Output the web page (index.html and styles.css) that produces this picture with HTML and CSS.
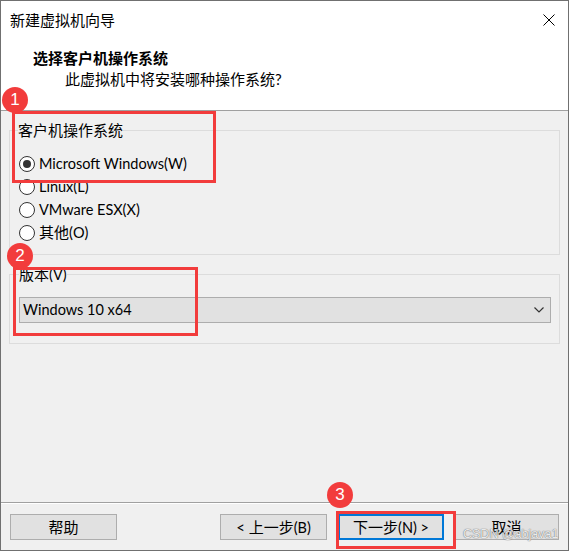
FILE: index.html
```html
<!DOCTYPE html>
<html lang="zh">
<head>
<meta charset="utf-8">
<title>新建虚拟机向导</title>
<link rel="stylesheet" href="styles.css">
</head>
<body>
<div class="window">
  <div class="titlebar">
    <span class="title">新建虚拟机向导</span>
    <svg class="close" width="12" height="12" viewBox="0 0 12 12"><path d="M0.5 0.5 L11.5 11.5 M11.5 0.5 L0.5 11.5" stroke="#000" stroke-width="1" fill="none"/></svg>
  </div>
  <div class="header">
    <div class="heading">选择客户机操作系统</div>
    <div class="subheading">此虚拟机中将安装哪种操作系统?</div>
  </div>
  <div class="content">
    <fieldset class="group group-os">
      <legend>客户机操作系统</legend>
      <label class="radio-row"><span class="radio checked"></span><span class="latin">Microsoft Windows(W)</span></label>
      <label class="radio-row"><span class="radio"></span><span class="latin">Linux(L)</span></label>
      <label class="radio-row"><span class="radio"></span><span class="latin">VMware ESX(X)</span></label>
      <label class="radio-row"><span class="radio"></span><span>其他<span class="latin">(O)</span></span></label>
    </fieldset>
    <fieldset class="group group-ver">
      <legend>版本<span class="latin">(V)</span></legend>
      <div class="select">
        <span class="latin">Windows 10 x64</span>
        <svg class="chev" width="10" height="6" viewBox="0 0 10 6"><path d="M0.5 0.5 L5 5 L9.5 0.5" stroke="#333" stroke-width="1.2" fill="none"/></svg>
      </div>
    </fieldset>
    <div class="spacer"></div>
    <div class="footer">
      <button class="btn btn-help">帮助</button>
      <div class="btn-group">
        <button class="btn btn-back">&lt; 上一步<span class="latin">(B)</span></button>
        <button class="btn btn-next">下一步<span class="latin">(N) &gt;</span></button>
        <button class="btn btn-cancel">取消</button>
      </div>
    </div>
  </div>

  <div class="mark box1"></div>
  <div class="badge badge1">1</div>
  <div class="mark box2"></div>
  <div class="badge badge2">2</div>
  <div class="mark box3"></div>
  <div class="badge badge3">3</div>
  <div class="watermark">CSDN @abjava1</div>
</div>
</body>
</html>
```

FILE: styles.css
```css
* { box-sizing: border-box; }
html, body { margin: 0; padding: 0; background: #fff; }
body {
  font-family: Lato, "Noto Sans CJK SC", sans-serif;
  font-size: 15px;
  color: #000;
}
.latin { font-size: 14.5px; }
.window {
  position: relative;
  width: 569px;
  height: 551px;
  border: 1px solid #707070;
  display: flex;
  flex-direction: column;
  background: #fff;
  overflow: hidden;
}
.titlebar {
  height: 37px;
  display: flex;
  align-items: center;
  justify-content: space-between;
  padding: 0 13px 0 9px;
}
.title { line-height: 20px; }
.close { display: block; }
.header {
  height: 73px;
  border-bottom: 1px solid #a0a0a0;
  padding: 10px 0 0 32px;
}
.heading { font-weight: bold; line-height: 20px; }
.subheading { padding-left: 32px; line-height: 20px; margin-top: 1px; }
.content {
  flex: 1;
  background: #f0f0f0;
  display: flex;
  flex-direction: column;
  padding: 0 8px;
}
.group {
  margin: 0;
  border: 1px solid #dcdcdc;
  min-width: 0;
}
.group legend {
  padding: 0;
  line-height: 20px;
  margin-left: 0;
}
.group-os {
  margin-top: 9px;
  padding: 12px 8px 10px 8px;
}
.radio-row {
  display: flex;
  align-items: center;
  height: 23px;
  gap: 4px;
  line-height: 20px;
}
.radio {
  width: 16px;
  height: 16px;
  border: 1px solid #333;
  border-radius: 50%;
  background: #fff;
  display: flex;
  align-items: center;
  justify-content: center;
  margin-left: 1px;
}
.radio.checked::after {
  content: "";
  width: 8px;
  height: 8px;
  border-radius: 50%;
  background: #333;
}
.group-ver {
  margin-top: 9px;
  padding: 12px 8px 20px 9px;
}
.select {
  height: 26px;
  border: 1px solid #adadad;
  background: #e1e1e1;
  display: flex;
  align-items: center;
  justify-content: space-between;
  padding: 0 6px 0 3px;
  line-height: 20px;
}
.chev { display: block; }
.spacer { flex: 1; }
.footer {
  margin: 0 -8px;
  border-top: 1px solid #a0a0a0;
  box-shadow: inset 0 1px 0 #fff;
  padding: 11px 9px 10px 9px;
  display: flex;
  justify-content: space-between;
}
.btn-group { display: flex; }
.btn {
  font: inherit;
  height: 26px;
  width: 107px;
  border: 1px solid #adadad;
  background: #e1e1e1;
  color: #000;
  padding: 0;
  line-height: 20px;
}
.btn-next {
  margin-left: 11px;
  width: 106px;
  border: 2px solid #0078d7;
}
.btn-cancel { margin-left: 10px; width: 105px; }

.mark {
  position: absolute;
  border: 3px solid #f23c3c;
}
.box1 { left: 11px; top: 110px; width: 204px; height: 72px; }
.box2 { left: 12px; top: 266px; width: 185px; height: 69px; }
.box3 { left: 335px; top: 510px; width: 120px; height: 38px; }
.badge {
  position: absolute;
  width: 26px;
  height: 26px;
  border-radius: 50%;
  background: #f23c3c;
  color: #fff;
  font-family: "Liberation Sans", Arial, sans-serif;
  font-size: 17px;
  line-height: 26px;
  text-align: center;
}
.badge1 { left: 1px; top: 86px; }
.badge2 { left: 6px; top: 242px; }
.badge3 { left: 326px; top: 481px; }
.watermark {
  position: absolute;
  left: 462px;
  top: 525px;
  white-space: nowrap;
  font-family: "Liberation Sans", Arial, sans-serif;
  font-size: 12.5px;
  line-height: 16px;
  color: rgba(255,255,255,0.85);
  text-shadow: 0 0 1px #777, 0 0 1px #777;
}
```
